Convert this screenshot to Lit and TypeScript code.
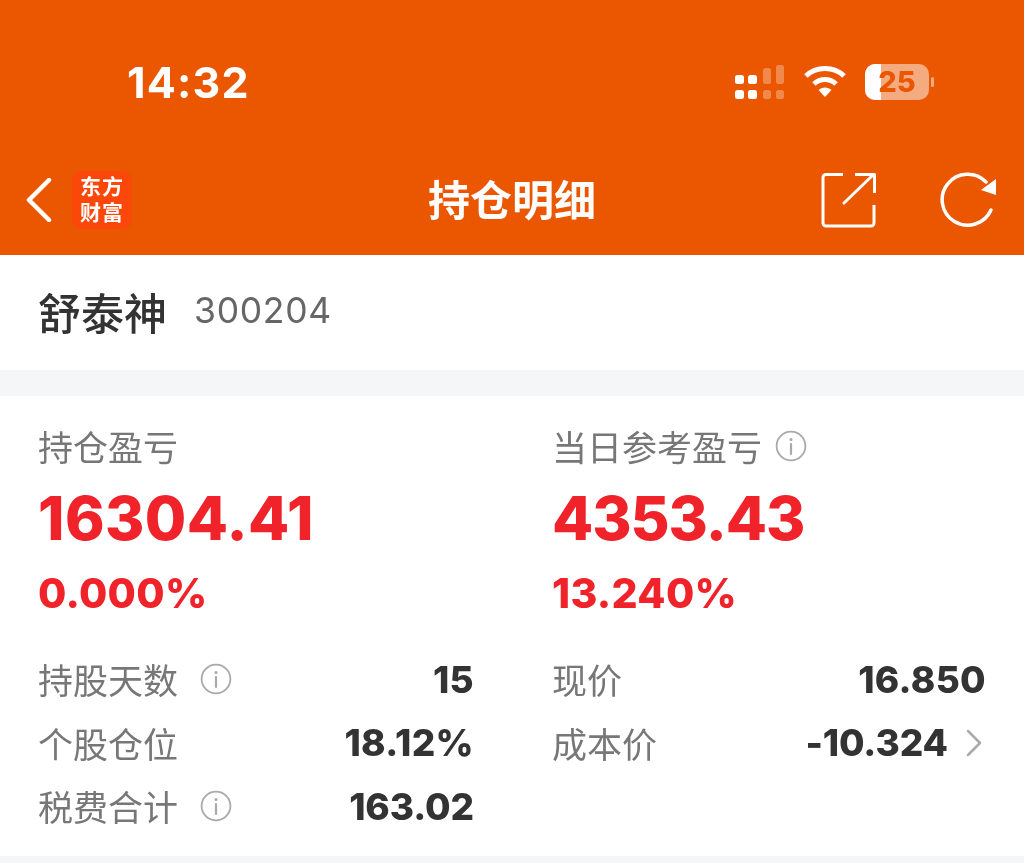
import { LitElement, html, css } from "lit";
import { customElement } from "lit/decorators.js";

const info = html`<svg class="info" viewBox="0 0 32 32" fill="none" stroke="#a9a9a9">
  <circle cx="16" cy="16" r="14.4" stroke-width="1.8"></circle>
  <path d="M16 14v10" stroke-width="2.2" stroke-linecap="round"></path>
  <circle cx="16" cy="9.6" r="1.5" fill="#a9a9a9" stroke="none"></circle>
</svg>`;

@customElement("app-root")
export class AppRoot extends LitElement {
  static styles = css`
    :host { display: block; width: 1024px; height: 863px; overflow: hidden; background: #f5f6f8;
      font-family: Inter, "Noto Sans CJK SC", sans-serif; }
    .head { background: #eb5600; height: 255px; display: flex; flex-direction: column; color: #fff; }
    .status { height: 165px; display: flex; align-items: flex-start; padding: 60px 89px 0 127px; box-sizing: border-box; justify-content: space-between; }
    .time { font-size: 43px; font-weight: 700; line-height: 44px; letter-spacing: 1.2px; filter: blur(.6px); }
    .sys { display: flex; align-items: center; gap: 18px; margin-top: 4px; filter: blur(.6px); }
    .battery { position: relative; width: 70px; height: 36px; display: block; }
    .batt-text { position: absolute; left: 10px; top: 0; width: 44px; text-align: center; font-size: 29px; line-height: 36px; font-weight: 800; color: #eb5600; }
    .nav { flex: 1; display: flex; align-items: center; padding: 0 28px 20px 26px; position: relative; filter: blur(.5px); }
    .logo { width: 60px; height: 58px; border-radius: 10px; background: #fb4709; margin-left: 20px; padding: 0 0 4px; box-sizing: border-box; display: flex; align-items: center; justify-content: center; text-align: center; font-size: 21px; line-height: 26px; letter-spacing: 1px; font-family: "Noto Sans CJK SC", sans-serif; font-weight: 700; }
    .title { position: absolute; left: 0; right: 0; top: 7px; text-align: center; font-family: "Noto Sans CJK SC", sans-serif; font-size: 42px; line-height: 52px; font-weight: 700; }
    .spacer { flex: 1; }
    .actions { display: flex; gap: 63px; align-items: center; }
    .name { height: 115px; background: #fff; display: flex; align-items: center; padding: 0 39px 4px 38px; box-sizing: border-box; filter: blur(.5px); }
    .name b { font-family: "Noto Sans CJK SC", sans-serif; font-weight: 500; font-size: 43px; color: #333; }
    .name span { font-size: 35.5px; color: #666; margin-left: 27px; letter-spacing: .7px; }
    .card { margin-top: 26px; height: 460px; background: #fff; padding: 28px 38px 0 38px; box-sizing: border-box; filter: blur(.6px); }
    .grid { display: grid; grid-template-columns: 436px 434px; column-gap: 78px; }
    .lab { font-family: "Noto Sans CJK SC", sans-serif; font-size: 35px; color: #777; line-height: 44px; display: flex; align-items: center; }
    .info { width: 32px; height: 32px; display: block; }
    .lab .info { margin-left: 13px; }
    .big { font-size: 60px; font-weight: 800; color: #f0222a; line-height: 70px; margin-top: 15px; letter-spacing: .4px; }
    .big.tight { letter-spacing: -1.1px; }
    .pct { font-size: 41px; font-weight: 800; color: #f0222a; line-height: 46px; margin-top: 17px; letter-spacing: .3px; }
    .rows { margin-top: 41px; display: flex; flex-direction: column; gap: 19.5px; }
    .row { display: flex; justify-content: space-between; align-items: center; height: 44px; }
    .row .info { margin-left: 22px; }
    .val { font-size: 37px; font-weight: 800; color: #333; letter-spacing: .3px; display: flex; align-items: center; }
    .val.narrow { letter-spacing: -.1px; }
    .chev { width: 18px; height: 30px; margin-left: 17px; margin-right: 3px; display: block; }
  `;

  render() {
    return html`
      <div class="head">
        <div class="status">
          <div class="time">14:32</div>
          <div class="sys">
            <svg width="50" height="36" viewBox="0 0 50 36" fill="#fff">
              <rect x="0" y="11" width="9" height="9" rx="2.5"></rect>
              <rect x="0" y="26" width="9" height="9" rx="2.5"></rect>
              <rect x="13" y="11" width="9" height="9" rx="2.5"></rect>
              <rect x="13" y="26" width="9" height="9" rx="2.5"></rect>
              <g opacity=".3">
                <rect x="28" y="4" width="8" height="16" rx="2.5"></rect>
                <rect x="28" y="26" width="8" height="9" rx="2.5"></rect>
                <rect x="41" y="1" width="8" height="19" rx="2.5"></rect>
                <rect x="41" y="26" width="8" height="9" rx="2.5"></rect>
              </g>
            </svg>
            <svg width="44" height="34" viewBox="0 0 44 34" fill="none" stroke="#fff" stroke-width="5">
              <path d="M3 11C13 1 31 1 41 11"></path>
              <path d="M11 19C17 13 27 13 33 19"></path>
              <path d="M22 32l-6.5-7C19 21.500 25 21.500 28.500 25z" fill="#fff" stroke="none"></path>
            </svg>
            <div class="battery">
              <svg width="70" height="36" viewBox="0 0 70 36">
                <rect x="0" y="0" width="64" height="36" rx="10" fill="#fff" opacity=".5"></rect>
                <path d="M10 0H16V36H10A10 10 0 0 1 0 26V10A10 10 0 0 1 10 0Z" fill="#fff"></path>
                <rect x="66" y="13" width="3" height="10" rx="1.500" fill="#fff" opacity=".5"></rect>
              </svg>
              <span class="batt-text">25</span>
            </div>
          </div>
        </div>
        <div class="nav">
          <svg width="26" height="44" viewBox="0 0 26 44" fill="none" stroke="#fff" stroke-width="4.500" stroke-linecap="round" stroke-linejoin="round">
            <path d="M23 2L3 22L23 42"></path>
          </svg>
          <div class="logo"><div>东方<br />财富</div></div>
          <div class="title">持仓明细</div>
          <div class="spacer"></div>
          <div class="actions">
            <svg width="56" height="56" viewBox="0 0 56 56" fill="none" stroke="#fff" stroke-width="3" stroke-linejoin="round">
              <path d="M22 2.500H5A3 3 0 0 0 2 5.500V51A3 3 0 0 0 5 54H50A3 3 0 0 0 53 51V33"></path>
              <path d="M23 31L52 3" stroke-linecap="round"></path>
              <path d="M34 2.500H53.500V21"></path>
            </svg>
            <svg width="56" height="56" viewBox="0 0 56 56" fill="none" stroke="#fff" stroke-width="3.500" stroke-linecap="round">
              <path d="M51 38A25.500 25.500 0 1 1 46 10"></path>
              <path d="M56 7V23L41 18Z" fill="#fff" stroke="none"></path>
            </svg>
          </div>
        </div>
      </div>
      <div class="name"><b>舒泰神</b><span>300204</span></div>
      <div class="card">
        <div class="grid">
          <div>
            <div class="lab">持仓盈亏</div>
            <div class="big">16304.41</div>
            <div class="pct">0.000%</div>
            <div class="rows">
              <div class="row"><div class="lab">持股天数${info}</div><div class="val">15</div></div>
              <div class="row"><div class="lab">个股仓位</div><div class="val">18.12%</div></div>
              <div class="row"><div class="lab">税费合计${info}</div><div class="val narrow">163.02</div></div>
            </div>
          </div>
          <div>
            <div class="lab">当日参考盈亏${info}</div>
            <div class="big tight">4353.43</div>
            <div class="pct">13.240%</div>
            <div class="rows">
              <div class="row"><div class="lab">现价</div><div class="val">16.850</div></div>
              <div class="row"><div class="lab">成本价</div><div class="val narrow">-10.324
                <svg class="chev" viewBox="0 0 18 30" fill="none" stroke="#aaa" stroke-width="2.500" stroke-linecap="round" stroke-linejoin="round"><path d="M3 3L15 15L3 27"></path></svg>
              </div></div>
            </div>
          </div>
        </div>
      </div>
    `;
  }
}
